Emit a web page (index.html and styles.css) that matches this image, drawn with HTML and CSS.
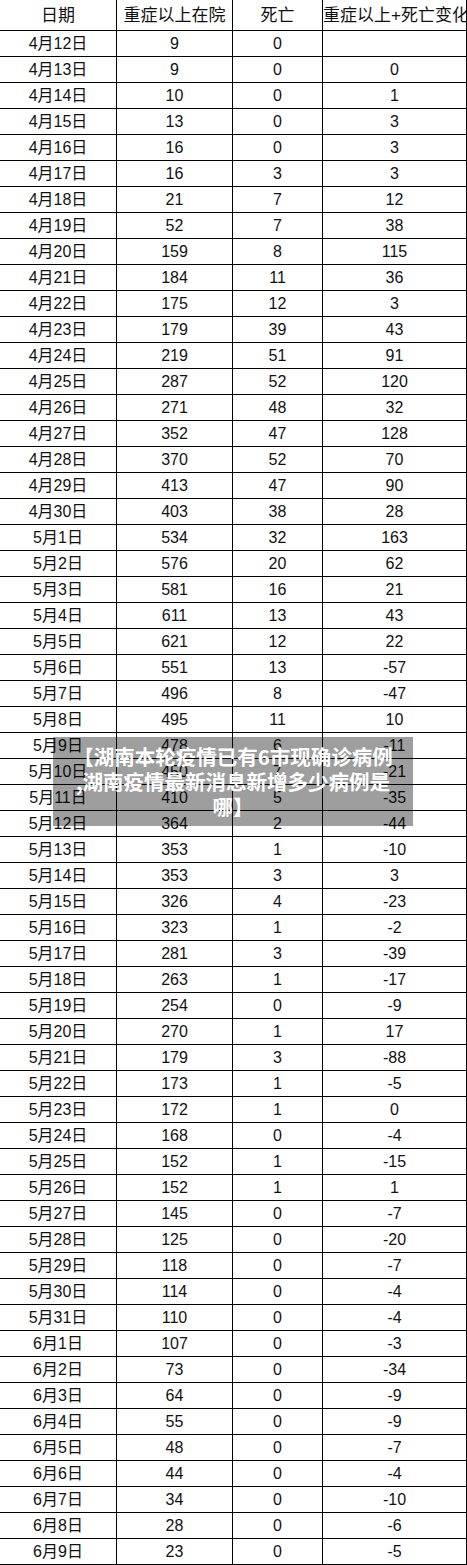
FILE: index.html
```html
<!DOCTYPE html>
<html lang="zh-CN">
<head>
<meta charset="utf-8">
<title>湖南疫情数据</title>
<link rel="stylesheet" href="styles.css">
</head>
<body>
<div class="page">
  <div class="sheet">
    <div class="c h">日期</div><div class="c h">重症以上在院</div><div class="c h">死亡</div><div class="c h left">重症以上+死亡变化</div>
    <div class="c">4月12日</div><div class="c">9</div><div class="c">0</div><div class="c"></div>
    <div class="c">4月13日</div><div class="c">9</div><div class="c">0</div><div class="c">0</div>
    <div class="c">4月14日</div><div class="c">10</div><div class="c">0</div><div class="c">1</div>
    <div class="c">4月15日</div><div class="c">13</div><div class="c">0</div><div class="c">3</div>
    <div class="c">4月16日</div><div class="c">16</div><div class="c">0</div><div class="c">3</div>
    <div class="c">4月17日</div><div class="c">16</div><div class="c">3</div><div class="c">3</div>
    <div class="c">4月18日</div><div class="c">21</div><div class="c">7</div><div class="c">12</div>
    <div class="c">4月19日</div><div class="c">52</div><div class="c">7</div><div class="c">38</div>
    <div class="c">4月20日</div><div class="c">159</div><div class="c">8</div><div class="c">115</div>
    <div class="c">4月21日</div><div class="c">184</div><div class="c">11</div><div class="c">36</div>
    <div class="c">4月22日</div><div class="c">175</div><div class="c">12</div><div class="c">3</div>
    <div class="c">4月23日</div><div class="c">179</div><div class="c">39</div><div class="c">43</div>
    <div class="c">4月24日</div><div class="c">219</div><div class="c">51</div><div class="c">91</div>
    <div class="c">4月25日</div><div class="c">287</div><div class="c">52</div><div class="c">120</div>
    <div class="c">4月26日</div><div class="c">271</div><div class="c">48</div><div class="c">32</div>
    <div class="c">4月27日</div><div class="c">352</div><div class="c">47</div><div class="c">128</div>
    <div class="c">4月28日</div><div class="c">370</div><div class="c">52</div><div class="c">70</div>
    <div class="c">4月29日</div><div class="c">413</div><div class="c">47</div><div class="c">90</div>
    <div class="c">4月30日</div><div class="c">403</div><div class="c">38</div><div class="c">28</div>
    <div class="c">5月1日</div><div class="c">534</div><div class="c">32</div><div class="c">163</div>
    <div class="c">5月2日</div><div class="c">576</div><div class="c">20</div><div class="c">62</div>
    <div class="c">5月3日</div><div class="c">581</div><div class="c">16</div><div class="c">21</div>
    <div class="c">5月4日</div><div class="c">611</div><div class="c">13</div><div class="c">43</div>
    <div class="c">5月5日</div><div class="c">621</div><div class="c">12</div><div class="c">22</div>
    <div class="c">5月6日</div><div class="c">551</div><div class="c">13</div><div class="c">-57</div>
    <div class="c">5月7日</div><div class="c">496</div><div class="c">8</div><div class="c">-47</div>
    <div class="c">5月8日</div><div class="c">495</div><div class="c">11</div><div class="c">10</div>
    <div class="c">5月9日</div><div class="c">478</div><div class="c">6</div><div class="c">-11</div>
    <div class="c">5月10日</div><div class="c">450</div><div class="c">7</div><div class="c">-21</div>
    <div class="c">5月11日</div><div class="c">410</div><div class="c">5</div><div class="c">-35</div>
    <div class="c">5月12日</div><div class="c">364</div><div class="c">2</div><div class="c">-44</div>
    <div class="c">5月13日</div><div class="c">353</div><div class="c">1</div><div class="c">-10</div>
    <div class="c">5月14日</div><div class="c">353</div><div class="c">3</div><div class="c">3</div>
    <div class="c">5月15日</div><div class="c">326</div><div class="c">4</div><div class="c">-23</div>
    <div class="c">5月16日</div><div class="c">323</div><div class="c">1</div><div class="c">-2</div>
    <div class="c">5月17日</div><div class="c">281</div><div class="c">3</div><div class="c">-39</div>
    <div class="c">5月18日</div><div class="c">263</div><div class="c">1</div><div class="c">-17</div>
    <div class="c">5月19日</div><div class="c">254</div><div class="c">0</div><div class="c">-9</div>
    <div class="c">5月20日</div><div class="c">270</div><div class="c">1</div><div class="c">17</div>
    <div class="c">5月21日</div><div class="c">179</div><div class="c">3</div><div class="c">-88</div>
    <div class="c">5月22日</div><div class="c">173</div><div class="c">1</div><div class="c">-5</div>
    <div class="c">5月23日</div><div class="c">172</div><div class="c">1</div><div class="c">0</div>
    <div class="c">5月24日</div><div class="c">168</div><div class="c">0</div><div class="c">-4</div>
    <div class="c">5月25日</div><div class="c">152</div><div class="c">1</div><div class="c">-15</div>
    <div class="c">5月26日</div><div class="c">152</div><div class="c">1</div><div class="c">1</div>
    <div class="c">5月27日</div><div class="c">145</div><div class="c">0</div><div class="c">-7</div>
    <div class="c">5月28日</div><div class="c">125</div><div class="c">0</div><div class="c">-20</div>
    <div class="c">5月29日</div><div class="c">118</div><div class="c">0</div><div class="c">-7</div>
    <div class="c">5月30日</div><div class="c">114</div><div class="c">0</div><div class="c">-4</div>
    <div class="c">5月31日</div><div class="c">110</div><div class="c">0</div><div class="c">-4</div>
    <div class="c">6月1日</div><div class="c">107</div><div class="c">0</div><div class="c">-3</div>
    <div class="c">6月2日</div><div class="c">73</div><div class="c">0</div><div class="c">-34</div>
    <div class="c">6月3日</div><div class="c">64</div><div class="c">0</div><div class="c">-9</div>
    <div class="c">6月4日</div><div class="c">55</div><div class="c">0</div><div class="c">-9</div>
    <div class="c">6月5日</div><div class="c">48</div><div class="c">0</div><div class="c">-7</div>
    <div class="c">6月6日</div><div class="c">44</div><div class="c">0</div><div class="c">-4</div>
    <div class="c">6月7日</div><div class="c">34</div><div class="c">0</div><div class="c">-10</div>
    <div class="c">6月8日</div><div class="c">28</div><div class="c">0</div><div class="c">-6</div>
    <div class="c">6月9日</div><div class="c">23</div><div class="c">0</div><div class="c">-5</div>
  </div>
  <div class="caption">【湖南本轮疫情已有6市现确诊病例<br>,湖南疫情最新消息新增多少病例是<br>哪】</div>
</div>
</body>
</html>
```

FILE: styles.css
```css
html, body {
  margin: 0;
  padding: 0;
  background: #ffffff;
}

.page {
  position: relative;
  width: 467px;
  height: 1565px;
  overflow: hidden;
}

.sheet {
  display: grid;
  grid-template-columns: 117px 116px 90px 144px;
  grid-template-rows: 31px;
  grid-auto-rows: 26px;
  font-family: "Liberation Sans", "Noto Sans CJK SC", sans-serif;
  font-size: 16px;
  color: #111111;
}

.c {
  box-sizing: border-box;
  border-right: 1px solid #000000;
  border-bottom: 1px solid #000000;
  display: flex;
  align-items: center;
  justify-content: center;
  white-space: nowrap;
  overflow: hidden;
  line-height: 1;
}

.h {
  font-size: 17px;
}

.left {
  justify-content: flex-start;
}

.caption {
  position: absolute;
  left: 53px;
  top: 737px;
  width: 360px;
  height: 89px;
  box-sizing: border-box;
  background: rgba(0, 0, 0, 0.38);
  display: flex;
  align-items: center;
  justify-content: center;
  text-align: center;
  color: #ffffff;
  font-family: "Noto Sans CJK SC", sans-serif;
  font-weight: 700;
  font-size: 20.5px;
  line-height: 25px;
}
```
